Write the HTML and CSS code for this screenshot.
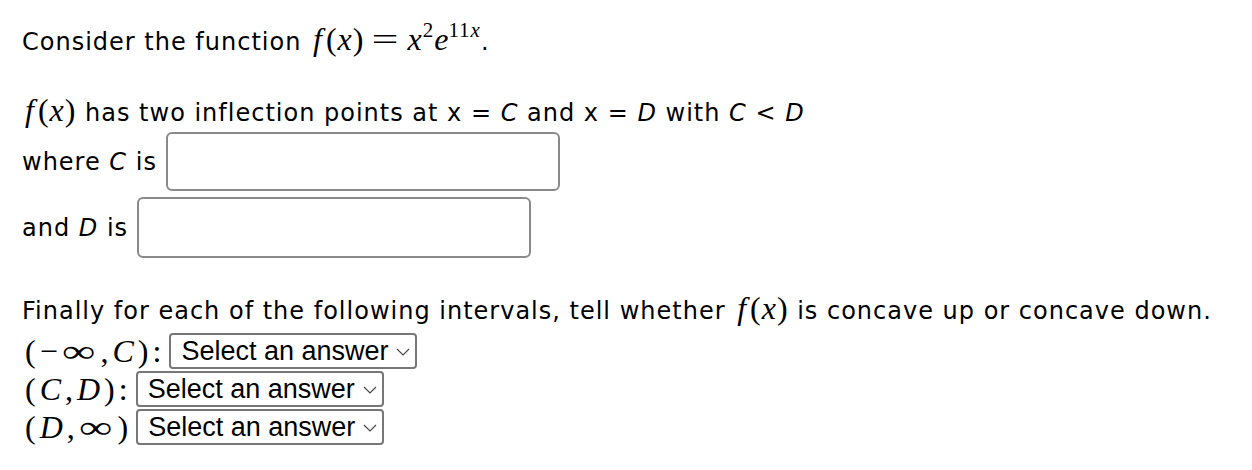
FILE: index.html
```html
<!DOCTYPE html>
<html>
<head>
<meta charset="utf-8">
<link rel="stylesheet" href="styles.css">
</head>
<body>
<div class="page">
  <p class="line l1">Consider the function <span class="m fx"><i class="mf">f</i>(<i>x</i>)</span><span class="m meq">=</span><span class="m"><i>x</i><sup class="msup">2</sup><i class="me">e</i><sup class="msup2">11<i>x</i></sup></span>.</p>
  <p class="line l2"><span class="m fx"><i class="mf">f</i>(<i>x</i>)</span> has two inflection points at x = <i>C</i> and x = <i>D</i> with <i>C</i> &lt; <i>D</i></p>
  <div class="row r1"><span>where <i>C</i> is</span><span class="tbox"></span></div>
  <div class="row r2"><span>and <i>D</i> is</span><span class="tbox"></span></div>
  <p class="line l3">Finally for each of the following intervals, tell whether <span class="m fx"><i class="mf">f</i>(<i>x</i>)</span> is concave up or concave down.</p>
  <div class="srow s1"><span class="m iv">(−<span class="inf">∞</span>,<i>C</i>):</span><span class="sel">Select an answer<svg class="chev" viewBox="0 0 14 8"><path d="M1 1 L7 7 L13 1" fill="none" stroke="#444" stroke-width="1.1"/></svg></span></div>
  <div class="srow s2"><span class="m iv">(<i>C</i>,<i>D</i>):</span><span class="sel">Select an answer<svg class="chev" viewBox="0 0 14 8"><path d="M1 1 L7 7 L13 1" fill="none" stroke="#444" stroke-width="1.1"/></svg></span></div>
  <div class="srow s3"><span class="m iv">(<i>D</i>,<span class="inf">∞</span>)</span><span class="sel">Select an answer<svg class="chev" viewBox="0 0 14 8"><path d="M1 1 L7 7 L13 1" fill="none" stroke="#444" stroke-width="1.1"/></svg></span></div>
</div>
</body>
</html>
```
FILE: styles.css
```css
html, body { margin: 0; padding: 0; background: #fff; }
.page {
  padding: 27px 22px 0 22px;
  font-family: "DejaVu Sans", sans-serif;
  font-size: 24px;
  letter-spacing: 1px;
  color: #000;
}
.line { margin: 0; line-height: 30px; height: 30px; white-space: nowrap; }
.l2 { margin-top: 41px; }
.m {
  font-family: "Liberation Serif", "DejaVu Serif", serif;
  font-size: 32px;
  line-height: 20px;
  letter-spacing: 0;
}
.m i { font-style: italic; }
.fx { letter-spacing: 1px; margin-left: 3px; }
.mf { margin-right: 3px; }
.meq { display: inline-block; transform: scaleX(1.5); margin: 0 13px 0 12px; }
.msup { font-size: 21px; vertical-align: 13px; line-height: 0; margin-left: 1px; }
.me { margin-left: 1px; }
.msup2 { font-size: 21px; vertical-align: 13px; line-height: 0; letter-spacing: 1px; }
.row { display: flex; align-items: center; gap: 9px; white-space: nowrap; }
.r1 { margin-top: 4px; height: 59px; }
.r2 { margin-top: 6px; height: 61px; }
.tbox {
  display: block;
  width: 394px;
  height: 100%;
  box-sizing: border-box;
  border: 2px solid #8a8a8a;
  border-radius: 6px;
}
.l3 { margin-top: 38px; }
.srow { display: flex; align-items: center; gap: 4px; height: 38px; white-space: nowrap; }
.srow.s1 { margin-top: 6px; }
.iv { margin-left: 3px; letter-spacing: 4px; line-height: 30px; }
.inf { display: inline-block; transform: scaleX(1.45); margin: 0 6px; }
.sel {
  display: inline-flex;
  align-items: center;
  box-sizing: border-box;
  height: 36px;
  width: 248px;
  padding: 0 5px 0 10px;
  border: 2px solid #777;
  border-radius: 4px;
  font-family: "Liberation Sans", Arial, sans-serif;
  font-size: 27px;
  letter-spacing: 0;
  justify-content: space-between;
}
.chev { width: 14px; height: 8px; margin-top: 2px; }
```
